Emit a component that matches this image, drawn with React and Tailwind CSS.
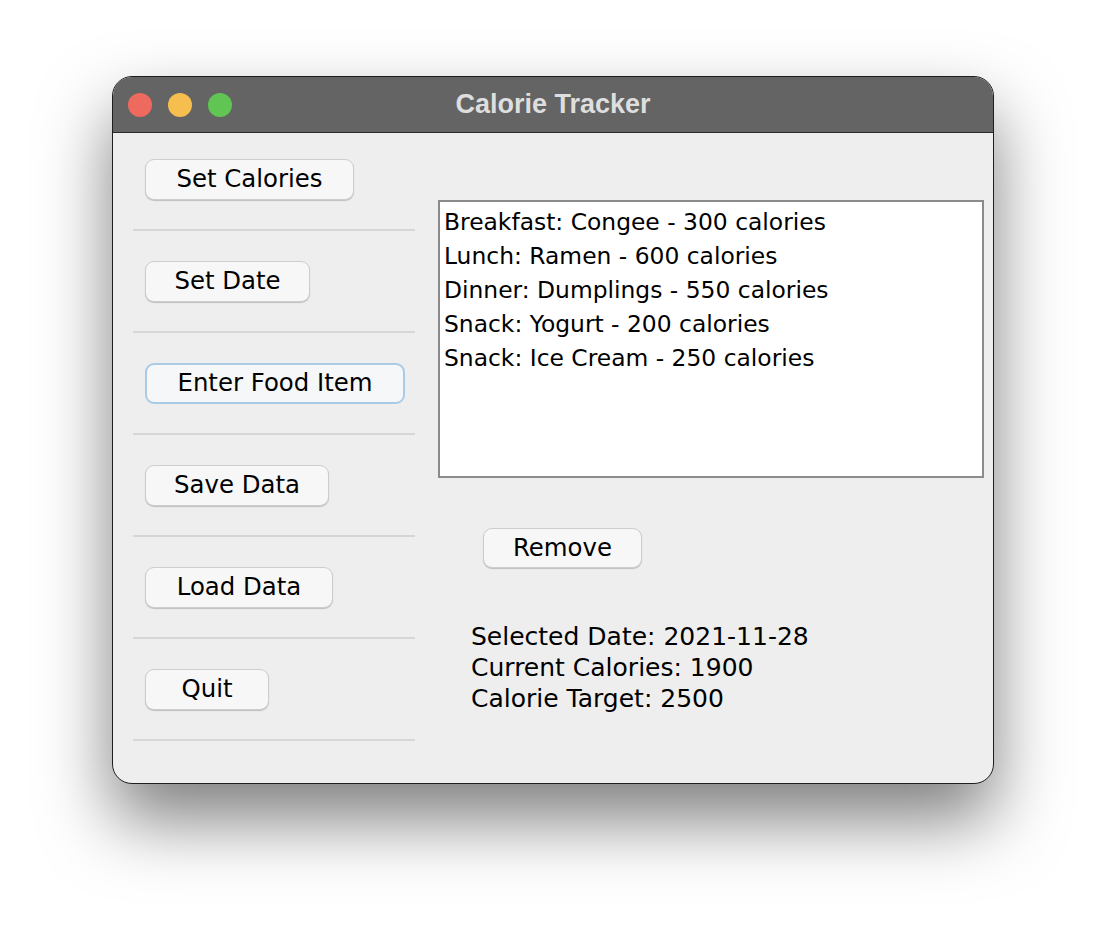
import React from "react";

const meals = [
  "Breakfast: Congee - 300 calories",
  "Lunch: Ramen - 600 calories",
  "Dinner: Dumplings - 550 calories",
  "Snack: Yogurt - 200 calories",
  "Snack: Ice Cream - 250 calories",
];

const menu = [
  { label: "Set Calories", width: "w-[209px]" },
  { label: "Set Date", width: "w-[165px]" },
  { label: "Enter Food Item", width: "w-[260px]", focused: true },
  { label: "Save Data", width: "w-[184px]" },
  { label: "Load Data", width: "w-[188px]" },
  { label: "Quit", width: "w-[124px]" },
];

function SwingButton({ label, width, focused }) {
  return (
    <button
      className={
        "h-[41px] rounded-[9px] flex items-center justify-center text-[24.4px] text-black " +
        width +
        (focused
          ? " border-2 border-[#a9cbe6] bg-[#f5f7f9]"
          : " border border-[#cdcdcd] bg-[#f7f7f7] shadow-[0_1px_1px_rgba(0,0,0,0.2)]")
      }
    >
      {label}
    </button>
  );
}

export default function App() {
  return (
    <div className="min-h-screen bg-white pt-[76px] font-['DejaVu_Sans',sans-serif]">
      {/* Window */}
      <div className="mx-auto w-[882px] h-[708px] rounded-[20px] border border-[#1e1e1e] bg-[#eeeeee] overflow-hidden flex flex-col shadow-[0_36px_70px_rgba(0,0,0,0.5)]">
        {/* Title bar */}
        <div className="relative h-[56px] shrink-0 bg-[#646464] border-b border-[#2a2a2a] flex items-center pl-[15px] gap-[16px]">
          <span className="w-[24px] h-[24px] rounded-full bg-[#ee6a5f]" />
          <span className="w-[24px] h-[24px] rounded-full bg-[#f5be4f]" />
          <span className="w-[24px] h-[24px] rounded-full bg-[#61c554]" />
          <div className="absolute inset-0 flex items-center justify-center font-['Liberation_Sans',sans-serif] font-bold text-[27px] text-[#dedede]">
            Calorie Tracker
          </div>
        </div>

        {/* Body */}
        <div className="flex flex-1">
          {/* Left menu */}
          <div className="ml-[20px] w-[282px] pt-[26px] flex flex-col">
            {menu.map((item, i) => (
              <div key={item.label} className={i === 0 ? "" : "pt-[30px]"}>
                <div className="pl-[12px]">
                  <SwingButton {...item} />
                </div>
                <div className="mt-[29px] h-[2px] bg-[#d6d6d6]" />
              </div>
            ))}
          </div>

          {/* Right side */}
          <div className="ml-[23px] pt-[67px] flex flex-col">
            <div className="w-[546px] h-[278px] border-2 border-[#8b8b8b] bg-white pt-[3px] pl-[4px]">
              {meals.map((m) => (
                <div key={m} className="text-[23.4px] leading-[34px] text-black whitespace-nowrap">
                  {m}
                </div>
              ))}
            </div>

            <div className="mt-[50px] ml-[45px]">
              <button className="w-[159px] h-[40px] rounded-[9px] border border-[#cdcdcd] bg-[#f7f7f7] shadow-[0_1px_1px_rgba(0,0,0,0.2)] flex items-center justify-center text-[24.4px] text-black">
                Remove
              </button>
            </div>

            <div className="mt-[53px] ml-[33px] text-[25px] leading-[31px] text-black">
              <div>Selected Date: 2021-11-28</div>
              <div>Current Calories: 1900</div>
              <div>Calorie Target: 2500</div>
            </div>
          </div>
        </div>
      </div>
    </div>
  );
}
